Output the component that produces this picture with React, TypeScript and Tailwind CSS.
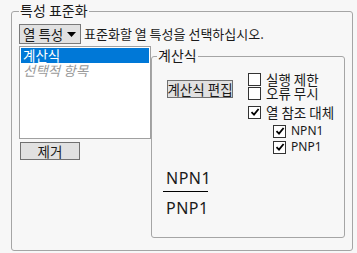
import React from "react";

const font = { fontFamily: '"Noto Sans CJK KR", "Noto Sans", sans-serif' };
const latin = { fontFamily: '"Noto Sans", "Noto Sans CJK KR", sans-serif' };

function Check({ checked }: { checked?: boolean }) {
  return (
    <span className="w-[13px] h-[13px] border border-[#333333] bg-white flex items-center justify-center shrink-0">
      {checked && (
        <svg width="10" height="10" viewBox="0 0 10 10">
          <path d="M1.5 5.2 L4 7.6 L8.6 2" fill="none" stroke="#000" strokeWidth="1.8" />
        </svg>
      )}
    </span>
  );
}

function Option({ label, checked, en }: { label: string; checked?: boolean; en?: boolean }) {
  return (
    <div className="flex items-center gap-[5px] h-[14px]">
      <Check checked={checked} />
      <span
        className={`${en ? "text-[12px]" : "text-[13.5px]"} leading-[14px] text-[#1a1a1a] whitespace-nowrap`}
        style={en ? latin : undefined}
      >
        {label}
      </span>
    </div>
  );
}

export default function App() {
  return (
    <div className="w-[357px] h-[253px] bg-[#f7f7f7] pt-[11px] pl-[11px] overflow-hidden text-[#1a1a1a]" style={font}>
      {/* 특성 표준화 group */}
      <div className="relative w-[342px] h-[240px] border border-[#a5a5a5] rounded-[3px] pl-[7px] pt-[12px]">
        <span className="absolute left-[7px] top-[-10px] px-[1px] bg-[#f7f7f7] text-[14px] leading-[16px] whitespace-nowrap">특성 표준화</span>

        <div className="flex items-center gap-[3px]">
          <div className="w-[62px] h-[20px] bg-[#e1e1e1] border border-[#7a7a7a] flex items-center pl-[3px] gap-[4px]">
            <span className="text-[13.5px] leading-[14px] whitespace-nowrap">열 특성</span>
            <svg width="9" height="5" viewBox="0 0 9 5"><path d="M0 0 H9 L4.5 5 Z" fill="#000" /></svg>
          </div>
          <span className="text-[13px] leading-[14px] whitespace-nowrap">표준화할 열 특성을 선택하십시오.</span>
        </div>

        <div className="flex mt-[2px]">
          <div className="flex flex-col">
            <div className="w-[132px] h-[93px] bg-white border border-[#a0a0a0] p-[1px]">
              <div className="h-[15px] bg-[#0078d7] text-white text-[13.5px] leading-[15px] pl-[2px]">계산식</div>
              <div className="h-[15px] text-[#9a9a9a] italic text-[13.5px] leading-[15px] pl-[2px]">선택적 항목</div>
            </div>
            <div className="ml-[1px] mt-[3px] w-[60px] h-[18px] bg-[#e1e1e1] border border-[#707070] flex items-center justify-center text-[13.5px] leading-[14px]">
              제거
            </div>
          </div>

          {/* 계산식 group */}
          <div className="relative mt-[10px] w-[194px] h-[182px] border border-[#a5a5a5] rounded-[3px] flex flex-col">
            <span className="absolute left-[5px] top-[-10px] px-[1px] bg-[#f7f7f7] text-[14px] leading-[16px] whitespace-nowrap">계산식</span>
            <div className="flex">
              <div className="ml-[15px] mt-[23px] w-[66px] h-[18px] bg-[#e1e1e1] border border-[#707070] flex items-center justify-center text-[13.5px] leading-[14px] whitespace-nowrap overflow-visible">
                계산식 편집
              </div>
              <div className="ml-[15px] mt-[15px] flex flex-col">
                <Option label="실행 제한" />
                <Option label="오류 무시" />
                <div className="mt-[5px]"><Option label="열 참조 대체" checked /></div>
                <div className="ml-[25px] mt-[5px] flex flex-col gap-[2px]">
                  <Option label="NPN1" checked en />
                  <Option label="PNP1" checked en />
                </div>
              </div>
            </div>
            <div className="ml-[11px] mt-[14px] flex flex-col items-start" style={latin}>
              <span className="text-[16px] leading-[20px] pl-[3px] tracking-[0.5px]">NPN1</span>
              <div className="w-[45px] h-[1px] bg-black mt-[3px]" />
              <span className="text-[16px] leading-[20px] pl-[3px] mt-[6px] tracking-[0.5px]">PNP1</span>
            </div>
          </div>
        </div>
      </div>
    </div>
  );
}
